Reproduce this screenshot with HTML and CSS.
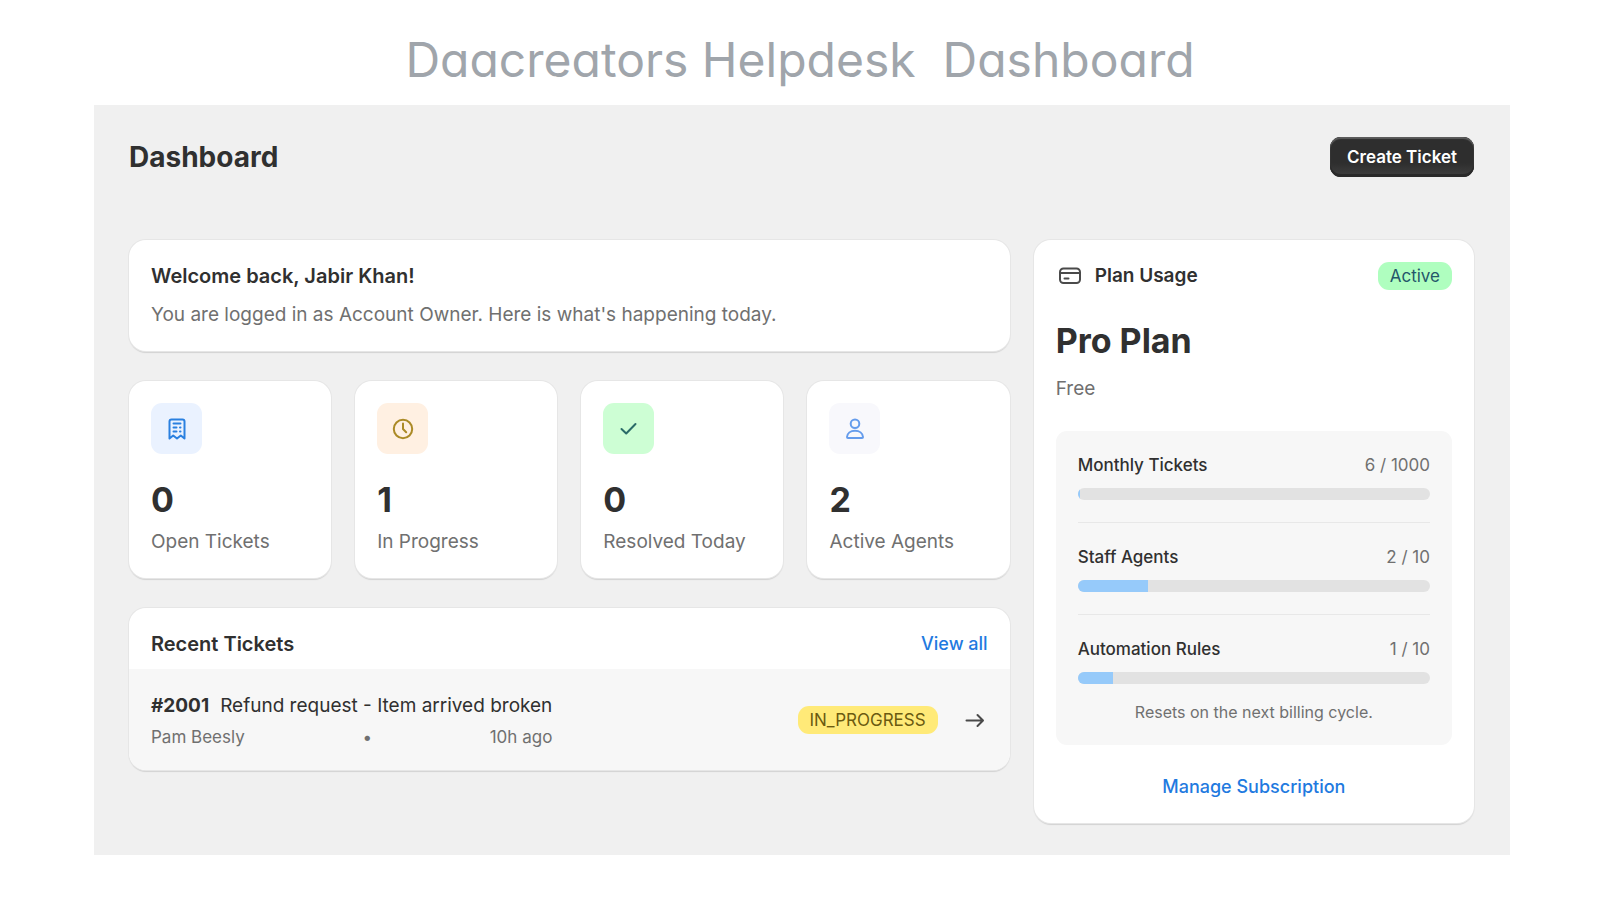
FILE: index.html
```
<!DOCTYPE html>
<html lang="en">
<head>
    <meta charset="UTF-8">
    <meta name="viewport" content="width=device-width, initial-scale=1.0">
    <title>Daacreators Helpdesk Dashboard</title>
    <link rel="stylesheet" href="styles.css">
</head>
<body>

<h1 class="page-title">Daacreators Helpdesk&nbsp; Dashboard</h1>

<main class="panel">
    <header class="panel-header">
        <h2>Dashboard</h2>
        <button type="button" class="create-button">Create Ticket</button>
    </header>

    <div class="layout">
        <div class="main-column">
            <section class="card">
                <h3>Welcome back, Jabir Khan!</h3>
                <p class="welcome-text">You are logged in as Account Owner. Here is what's happening today.</p>
            </section>

            <div class="stats">
                <section class="card">
                    <div class="stat-icon blue">
                        <svg viewBox="0 0 24 24"><path d="M4.500 21.500V4.500a2 2 0 0 1 2-2h11a2 2 0 0 1 2 2v17l-3.700-3-3.800 3-3.800-3z"/><path d="M8.500 6.500h7M8.500 10.500h3M15 10.500h.5M8.500 14.500h3M15 14.500h.5"/></svg>
                    </div>
                    <p class="stat-number">0</p>
                    <p class="stat-label">Open Tickets</p>
                </section>
                <section class="card">
                    <div class="stat-icon orange">
                        <svg viewBox="0 0 24 24"><circle cx="12" cy="12" r="9.200"/><path d="M12 6.500v5.500l3.200 3.200"/></svg>
                    </div>
                    <p class="stat-number">1</p>
                    <p class="stat-label">In Progress</p>
                </section>
                <section class="card">
                    <div class="stat-icon green">
                        <svg viewBox="0 0 24 24"><path d="M4.500 12l4.700 4.500 9.300-9.500"/></svg>
                    </div>
                    <p class="stat-number">0</p>
                    <p class="stat-label">Resolved Today</p>
                </section>
                <section class="card">
                    <div class="stat-icon grey">
                        <svg viewBox="0 0 24 24"><circle cx="12" cy="6.800" r="4.300"/><path d="M4 20c.3-3.800 3.500-6.300 8-6.300s7.700 2.500 8 6.300c0 .8-.4 1-1 1H5c-.6 0-1-.2-1-1z"/></svg>
                    </div>
                    <p class="stat-number">2</p>
                    <p class="stat-label">Active Agents</p>
                </section>
            </div>

            <section class="card recent">
                <div class="recent-header">
                    <h3>Recent Tickets</h3>
                    <a class="link" href="#">View all</a>
                </div>
                <div class="ticket">
                    <div class="ticket-info">
                        <p class="ticket-title"><strong>#2001</strong><span>Refund request - Item arrived broken</span></p>
                        <p class="ticket-meta"><span>Pam Beesly</span><span>•</span><span>10h ago</span></p>
                    </div>
                    <span class="badge yellow">IN_PROGRESS</span>
                    <a class="ticket-open" href="#" aria-label="Open ticket">
                        <svg viewBox="0 0 26 26"><path d="M4.500 13.500h16M15.500 8l5.500 5.500-5.500 5.500"/></svg>
                    </a>
                </div>
            </section>
        </div>

        <aside class="card plan">
            <div class="plan-header">
                <svg viewBox="0 0 28 28"><rect x="4" y="6.500" width="20" height="14.500" rx="3.500"/><path d="M4 11h20M8.500 16.500h4"/></svg>
                <h3>Plan Usage</h3>
                <span class="badge mint">Active</span>
            </div>
            <p class="plan-name">Pro Plan</p>
            <p class="plan-price">Free</p>

            <div class="usage">
                <div class="usage-item">
                    <label for="tickets">Monthly Tickets</label>
                    <span>6 / 1000</span>
                    <progress id="tickets" value="6" max="1000"></progress>
                </div>
                <div class="usage-item">
                    <label for="agents">Staff Agents</label>
                    <span>2 / 10</span>
                    <progress id="agents" value="2" max="10"></progress>
                </div>
                <div class="usage-item">
                    <label for="rules">Automation Rules</label>
                    <span>1 / 10</span>
                    <progress id="rules" value="1" max="10"></progress>
                </div>
                <p class="usage-note">Resets on the next billing cycle.</p>
            </div>

            <a class="link manage" href="#">Manage Subscription</a>
        </aside>
    </div>
</main>

</body>
</html>
```
FILE: styles.css
```
* {
    box-sizing: border-box;
}
body {
    margin: 0;
    background-color: white;
    color: #303030;
    font-family: Inter, "Liberation Sans", sans-serif;
    font-size: 19px;
    line-height: 28px;
}
h1, h2, h3, p {
    margin: 0;
}
h3 {
    font-size: 20px;
    font-weight: 600;
}
a {
    color: #1f7ae0;
    text-decoration: none;
}
a:hover {
    text-decoration: underline;
}
svg {
    display: block;
    fill: none;
    stroke: currentColor;
    stroke-width: 2;
    stroke-linecap: round;
    stroke-linejoin: round;
}

.page-title {
    padding: 24px 0 9px;
    text-align: center;
    font-size: 48px;
    font-weight: 400;
    line-height: 72px;
    color: #a0a5ab;
    font-feature-settings: "cv11"; /* single-storey a */
}
.panel {
    margin: 0 90px 45px 94px;
    padding: 32px 36px 32px 35px;
    background-color: #f0f0f0;
}
.panel-header {
    display: flex;
    justify-content: space-between;
    align-items: center;
    margin-bottom: 63px;
}
.panel-header h2 {
    font-size: 28px;
    font-weight: 700;
    line-height: 40px;
}
.create-button {
    height: 40px;
    padding: 0 17px;
    border: none;
    border-radius: 11px;
    background: linear-gradient(#2e2e2e 65%, #404040);
    box-shadow: inset 0 2px 1px #5c5c5c, inset 0 -3px 0 #2a2a2a, inset 0 0 0 1px #303030;
    color: white;
    font-family: inherit;
    font-size: 17px;
    font-weight: 600;
    cursor: pointer;
}

.layout {
    display: grid;
    grid-template-columns: 2fr 1fr;
    gap: 24px;
    align-items: start;
}
.main-column {
    display: flex;
    flex-direction: column;
    gap: 30px;
}
.card {
    padding: 22px;
    border-radius: 17px;
    background-color: white;
    box-shadow: 0 0 0 1px #e6e6e6, 0 2px 1px #d2d2d2;
}
.link {
    font-size: 18px;
    font-weight: 500;
}
.welcome-text {
    margin-top: 11px;
    color: #707070;
}

.stats {
    display: grid;
    grid-template-columns: repeat(4, 1fr);
    gap: 24px;
}
.stat-icon {
    display: flex;
    justify-content: center;
    align-items: center;
    width: 51px;
    height: 51px;
    border-radius: 11px;
}
.stat-icon svg {
    width: 24px;
    height: 24px;
}
.blue {
    background-color: #eaf2ff;
    color: #2a80e0;
}
.orange {
    background-color: #fff0e2;
    color: #ab8a26;
}
.green {
    background-color: #cdfed4;
    color: #2a6b68;
}
.grey {
    background-color: #f8f8fc;
    color: #659cec;
}
.stat-number {
    margin: 29px 0 11px;
    font-size: 34px;
    font-weight: 700;
    line-height: 34px;
}
.stat-label {
    color: #707070;
}

.recent {
    padding: 0;
    overflow: hidden;
}
.recent-header {
    display: flex;
    justify-content: space-between;
    padding: 22px 22px 11px;
}
.ticket {
    display: flex;
    align-items: center;
    padding: 23px 22px 22px;
    background-color: #f7f7f7;
}
.ticket-info {
    margin-right: auto;
}
.ticket-title {
    display: flex;
    gap: 11px;
}
.ticket-title strong {
    font-weight: 700;
}
.ticket-meta {
    display: flex;
    justify-content: space-between;
    margin-top: 6px;
    font-size: 17px;
    line-height: 22px;
    color: #707070;
}
.ticket-open {
    margin-left: 24px;
    color: #4a4a4a;
}
.ticket-open svg {
    width: 26px;
    height: 26px;
}
.badge {
    padding: 0 12px;
    border-radius: 11px;
    font-size: 17px;
    line-height: 28px;
}
.yellow {
    background-color: #ffea78;
    color: #6b5a10;
}
.mint {
    background-color: #affebf;
    color: #24566a;
}

.plan-header {
    display: flex;
    align-items: center;
    gap: 11px;
}
.plan-header svg {
    width: 28px;
    height: 28px;
    color: #4a4a4a;
}
.plan-header h3 {
    font-size: 19px;
}
.plan-header .badge {
    margin-left: auto;
}
.plan-name {
    margin-top: 31px;
    font-size: 34px;
    font-weight: 700;
    line-height: 40px;
}
.plan-price {
    margin: 14px 0 28px;
    color: #707070;
}
.usage {
    padding: 22px;
    border-radius: 11px;
    background-color: #f7f7f7;
}
.usage-item {
    display: grid;
    grid-template-columns: 1fr auto;
    row-gap: 11px;
    font-size: 17px;
    line-height: 24px;
}
.usage-item + .usage-item {
    margin-top: 22px;
    padding-top: 22px;
    border-top: 1px solid #e8e8e8;
}
.usage-item label {
    font-weight: 500;
}
.usage-item span {
    color: #707070;
}
.usage-item progress {
    grid-column: 1 / -1;
    display: block;
    width: 100%;
    height: 12px;
    border-radius: 6px;
    overflow: hidden;
    appearance: none;
}
.usage-item progress::-webkit-progress-bar {
    background-color: #e2e2e2;
}
.usage-item progress::-webkit-progress-value {
    background-color: #96cafa;
}
.usage-note {
    margin-top: 17px;
    text-align: center;
    font-size: 16px;
    line-height: 22px;
    color: #707070;
}
.manage {
    display: block;
    margin-top: 28px;
    text-align: center;
}
```
